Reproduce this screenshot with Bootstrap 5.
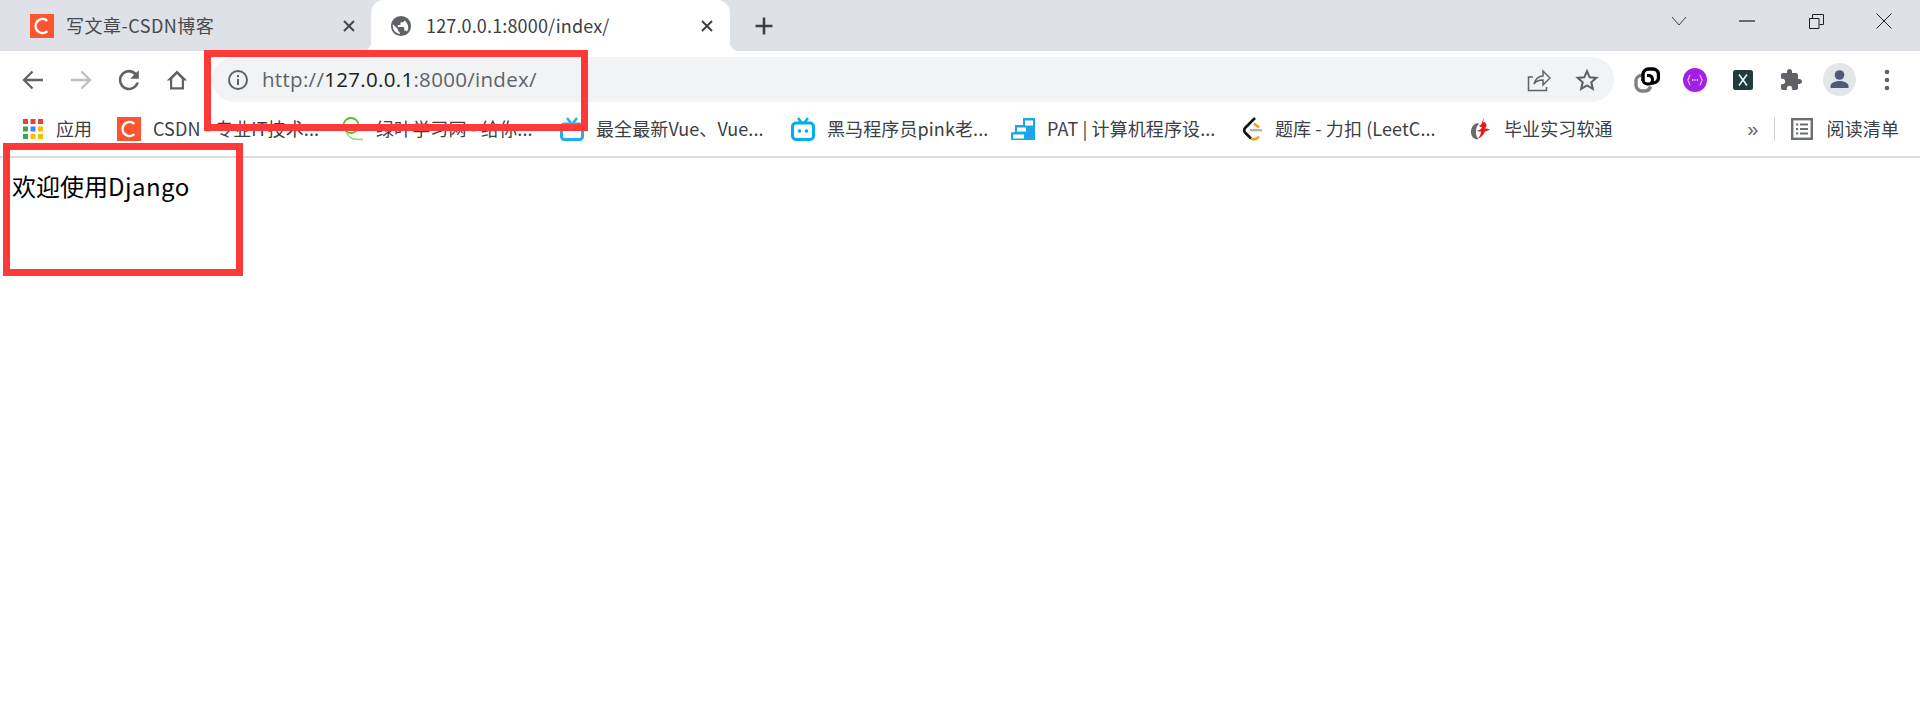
<!DOCTYPE html>
<html lang="zh-CN">
<head>
<meta charset="utf-8">
<title>127.0.0.1:8000/index/</title>
<link href="https://cdn.jsdelivr.net/npm/bootstrap@5.3.0/dist/css/bootstrap.min.css" rel="stylesheet">
<style>
html,body{height:100%;overflow:hidden}
body{background:#fff;color:#000;font-family:"Noto Sans CJK SC","Liberation Sans",sans-serif;position:relative}
.tabbar{height:51px;background:#dee1e6}
.tab-off{width:371px;padding-left:30px;padding-right:15px;font-size:18px;color:#45484d;letter-spacing:.5px}
.tab-on{width:359px;padding-left:19px;padding-right:16px;background:#fff;border-radius:13px 13px 0 0;font-size:18px;color:#3c4043;position:relative;letter-spacing:.15px}
.tab-on::before,.tab-on::after{content:"";position:absolute;bottom:0;width:9px;height:9px}
.tab-on::before{left:-9px;background:radial-gradient(circle at 0 0,#dee1e6 9px,#fff 9.5px)}
.tab-on::after{right:-9px;background:radial-gradient(circle at 100% 0,#dee1e6 9px,#fff 9.5px)}
.tab-title{flex:1;margin-left:12px;white-space:nowrap;overflow:hidden}
.tab-on .tab-title{margin-left:14px}
.newtab{margin-left:20px;width:28px}
.winctl{width:68px;height:42px}
.winctl-gap{margin-right:1px}
.winctl-end{margin-right:2px}
.toolbar{height:57px;padding:6px 9px 0}
.tbtn{width:48px;height:45px;flex:none}
.omni{height:45px;background:#f1f3f4;border-radius:23px;margin:0 9px 0 11px;padding-left:15px;padding-right:3px;font-family:"Open Sans","Liberation Sans",sans-serif;font-size:20.5px;letter-spacing:.3px;color:#5f6368}
.omni b{font-weight:400;color:#202124}
.omni-url{margin-left:13px}
.bmbar{height:48px;padding:0 0 7px 23px;font-size:18px;color:#3c4043;white-space:nowrap;letter-spacing:.1px}
.bm{flex:none;gap:12px}
.bm-w1{width:94px;gap:13px}
.bm-w2{width:225px}
.bm-w3{width:218px}
.bm-w4{width:231px}
.bm-w5{width:220px}
.bm-w6{width:232px}
.bm-w7{width:226px;gap:12px}
.bm-w8{gap:14px}
.bm-fill{flex:1}
.bm-more{font-size:20px;color:#5f6368;margin-right:15px;line-height:1;font-family:"Liberation Sans",sans-serif}
.bm-sep{width:1px;height:24px;background:#d3d5d8;margin-right:16px}
.bm-read{gap:14px;margin-right:21px}
.rule{height:2px;background:#dadce0}
.page-msg{margin:0;padding:13px 12px 0;font-size:24px;line-height:30px;color:#000}
.page-latin{letter-spacing:.45px}
.redbox{position:absolute;border:7px solid #ff3838;pointer-events:none}
.rb-a{left:204px;top:50px;width:384px;height:81px}
.rb-b{left:3px;top:143px;width:240px;height:133px}
svg{display:block;flex:none}
</style>
</head>
<body>
<div class="tabbar d-flex align-items-stretch">
  <div class="tab-off d-flex align-items-center">
    <svg width="24" height="24" viewBox="0 0 24 24"><rect width="24" height="24" fill="#fc5531"/><path d="M16.500 6.200A7 7 0 1 0 16.500 17.800" fill="none" stroke="#fff" stroke-width="2.400" stroke-linecap="round"/></svg>
    <span class="tab-title">写文章-CSDN博客</span>
    <svg width="14" height="14" viewBox="0 0 14 14"><path d="M2 2l10 10M12 2L2 12" stroke="#45484d" stroke-width="2"/></svg>
  </div>
  <div class="tab-on d-flex align-items-center">
    <svg width="22" height="22" viewBox="0 0 24 24"><path fill="#5f6368" d="M12 1a11 11 0 1 0 0 22 11 11 0 0 0 0-22zM3 12c0-.7.1-1.300.2-2l5.300 5.300v1.100c0 1.100.9 2 2 2v2.500A9 9 0 0 1 3 12zm15.400 6.400c-.3-.8-1-1.400-1.900-1.400h-1v-3c0-.6-.4-1-1-1h-6v-2h2c.6 0 1-.4 1-1V8h2c1.100 0 2-.9 2-2v-.4a9 9 0 0 1 2.900 12.800z"/></svg>
    <span class="tab-title">127.0.0.1:8000/index/</span>
    <svg width="14" height="14" viewBox="0 0 14 14"><path d="M2 2l10 10M12 2L2 12" stroke="#3c4043" stroke-width="2"/></svg>
  </div>
  <div class="newtab d-flex align-items-center justify-content-center">
    <svg width="20" height="20" viewBox="0 0 20 20"><path d="M10 1.500v17M1.500 10h17" stroke="#3c4043" stroke-width="2.600"/></svg>
  </div>
  <div class="ms-auto d-flex align-items-start">
    <div class="winctl d-flex align-items-center justify-content-center"><svg width="16" height="10" viewBox="0 0 16 10"><path d="M1 1l7 8 7-8" fill="none" stroke="#3c4043" stroke-width="1"/></svg></div>
    <div class="winctl winctl-gap d-flex align-items-center justify-content-center"><svg width="16" height="2" viewBox="0 0 16 2"><path d="M0 1h16" stroke="#1f1f1f" stroke-width="1.200"/></svg></div>
    <div class="winctl d-flex align-items-center justify-content-center"><svg width="15" height="15" viewBox="0 0 15 15"><path d="M.5 4.500h9.500v10H.5zM3.500 4V.5h11v10H10.500" fill="none" stroke="#1f1f1f" stroke-width="1"/></svg></div>
    <div class="winctl winctl-end d-flex align-items-center justify-content-center"><svg width="16" height="16" viewBox="0 0 16 16"><path d="M.5.500l15 15M15.500.500l-15 15" stroke="#1f1f1f" stroke-width="1"/></svg></div>
  </div>
</div>

<div class="toolbar d-flex align-items-start">
  <div class="tbtn d-flex align-items-center justify-content-center"><svg width="24" height="24" viewBox="0 0 24 24"><path d="M22 12H3M11.500 3.500L3 12l8.500 8.500" fill="none" stroke="#5f6368" stroke-width="2.300"/></svg></div>
  <div class="tbtn d-flex align-items-center justify-content-center"><svg width="24" height="24" viewBox="0 0 24 24"><path d="M2 12h19M12.500 3.500L21 12l-8.500 8.500" fill="none" stroke="#bdc1c6" stroke-width="2.300"/></svg></div>
  <div class="tbtn d-flex align-items-center justify-content-center"><svg width="27" height="27" viewBox="0 0 24 24"><path fill="#5f6368" d="M20.300 3.700v7.600h-7.600l3.500-3.500A6.800 6.800 0 0 0 11.500 5.700a6.800 6.800 0 1 0 6.500 9h2.400a9.100 9.100 0 1 1-8.900-11.300c2.500 0 4.800 1 6.400 2.700z"/></svg></div>
  <div class="tbtn d-flex align-items-center justify-content-center"><svg width="24" height="24" viewBox="0 0 24 24"><path d="M12 2.500L1.800 12.500h3.200v9h14v-9h3.200zM7.200 19.300v-8.400L12 6l4.800 4.900v8.400z" fill="#5f6368" fill-rule="evenodd"/></svg></div>
  <div class="omni flex-grow-1 d-flex align-items-center">
    <svg width="22" height="22" viewBox="0 0 22 22"><circle cx="11" cy="11" r="9" fill="none" stroke="#5f6368" stroke-width="2"/><path d="M11 10v6M11 6v2.200" stroke="#5f6368" stroke-width="2"/></svg>
    <span class="omni-url">http://<b>127.0.0.1</b>:8000/index/</span>
    <div class="ms-auto d-flex">
      <div class="tbtn d-flex align-items-center justify-content-center"><svg width="24" height="24" viewBox="0 0 24 24"><path d="M6 9H1.500v13.500h18V19M7 16c1-5 5-8 9-8V3l7 7-7 7v-5c-4 0-7 1-9 4z" fill="none" stroke="#5f6368" stroke-width="1.500"/></svg></div>
      <div class="tbtn d-flex align-items-center justify-content-center"><svg width="24" height="24" viewBox="0 0 24 24"><path d="M12 3.200l2.700 6.100 6.600.6-5 4.400 1.500 6.500L12 17.400l-5.800 3.400 1.500-6.500-5-4.400 6.600-.6z" fill="none" stroke="#5f6368" stroke-width="2.100"/></svg></div>
    </div>
  </div>
  <div class="tbtn d-flex align-items-center justify-content-center"><svg width="26" height="26" viewBox="0 0 26 26"><path d="M8 8.500H7a5.500 5.500 0 0 0-5 5.500v4a6 6 0 0 0 6 6h3a6 6 0 0 0 5.500-4.500" fill="none" stroke="#808080" stroke-width="3.400"/><path d="M9 14V7.500A5.500 5.500 0 0 1 14.500 2H19a5.500 5.500 0 0 1 5.500 5.500v3A5.500 5.500 0 0 1 19 16h-1" fill="none" stroke="#000" stroke-width="3.400"/><path d="M9 12.500a4.500 4.500 0 0 0 4.500 4.500H15a4 4 0 0 0 3.500-4v-1A4 4 0 0 0 14.500 8.500H13" fill="none" stroke="#000" stroke-width="3"/></svg></div>
  <div class="tbtn d-flex align-items-center justify-content-center"><svg width="24" height="24" viewBox="0 0 24 24"><circle cx="12" cy="12" r="12" fill="#a21fe8"/><path d="M7.500 7C5.500 7 6.500 11.500 4.500 12c2 .5 1 5 3 5M16.500 7c2 0 1 4.500 3 5-2 .5-1 5-3 5" fill="none" stroke="#f0d8ff" stroke-width="1.100"/><path d="M9 12h1.200M11.400 12h1.200M13.800 12H15" stroke="#fff" stroke-width="1.600"/></svg></div>
  <div class="tbtn d-flex align-items-center justify-content-center"><svg width="20" height="20" viewBox="0 0 20 20"><rect width="20" height="20" rx="2.500" fill="#25393f"/><path d="M6 4.500l8 11M14 4.500l-8 11" stroke="#eef4f5" stroke-width="1.600"/></svg></div>
  <div class="tbtn d-flex align-items-center justify-content-center"><svg width="24" height="24" viewBox="0 0 24 24"><path fill="#5f6368" d="M20.500 11H19V7c0-1.100-.9-2-2-2h-4V3.500C13 2.120 11.880 1 10.500 1S8 2.120 8 3.500V5H4c-1.100 0-1.990.9-1.990 2v3.800H3.500c1.490 0 2.700 1.210 2.700 2.700s-1.210 2.700-2.700 2.700H2V20c0 1.100.9 2 2 2h3.800v-1.500c0-1.490 1.210-2.700 2.700-2.700 1.490 0 2.700 1.210 2.700 2.700V22H17c1.100 0 2-.9 2-2v-4h1.500c1.380 0 2.500-1.120 2.500-2.500S21.880 11 20.500 11z"/></svg></div>
  <div class="tbtn d-flex align-items-center justify-content-center"><svg width="33" height="33" viewBox="0 0 33 33"><circle cx="16.500" cy="16.500" r="16.500" fill="#e3e5e9"/><circle cx="16.500" cy="12" r="4.800" fill="#4f5b73"/><path d="M7.500 25v-2c0-3.500 5.500-5 9-5s9 1.500 9 5v2z" fill="#4f5b73"/></svg></div>
  <div class="tbtn d-flex align-items-center justify-content-center"><svg width="6" height="22" viewBox="0 0 6 22"><circle cx="3" cy="3" r="2.300" fill="#5f6368"/><circle cx="3" cy="11" r="2.300" fill="#5f6368"/><circle cx="3" cy="19" r="2.300" fill="#5f6368"/></svg></div>
</div>

<div class="bmbar d-flex align-items-center">
  <div class="bm bm-w1 d-flex align-items-center">
    <svg width="20" height="20" viewBox="0 0 20 20"><rect width="5" height="5" fill="#ea4335"/><rect x="7.500" width="5" height="5" fill="#ea4335"/><rect x="15" width="5" height="5" fill="#ea4335"/><rect y="7.500" width="5" height="5" fill="#34a853"/><rect x="7.500" y="7.500" width="5" height="5" fill="#4285f4"/><rect x="15" y="7.500" width="5" height="5" fill="#fbbc05"/><rect y="15" width="5" height="5" fill="#34a853"/><rect x="7.500" y="15" width="5" height="5" fill="#fbbc05"/><rect x="15" y="15" width="5" height="5" fill="#fbbc05"/></svg>
    <span>应用</span>
  </div>
  <div class="bm bm-w2 d-flex align-items-center">
    <svg width="24" height="24" viewBox="0 0 24 24"><rect width="24" height="24" fill="#fc5531"/><path d="M16.500 6.200A7 7 0 1 0 16.500 17.800" fill="none" stroke="#fff" stroke-width="2.400" stroke-linecap="round"/></svg>
    <span>CSDN - 专业IT技术...</span>
  </div>
  <div class="bm bm-w3 d-flex align-items-center">
    <svg width="22" height="24" viewBox="0 0 22 24"><circle cx="9" cy="8.500" r="7.500" fill="none" stroke="#4cc522" stroke-width="1.800"/><path d="M4 15c1 2 3 5 6 6.500 3 1 7 1 11 1" fill="none" stroke="#8fd67a" stroke-width="1.600"/><path d="M5 13c3-1 6-3 8-6" fill="none" stroke="#4cc522" stroke-width="1.500"/></svg>
    <span>绿叶学习网 - 给你...</span>
  </div>
  <div class="bm bm-w4 d-flex align-items-center">
    <svg width="24" height="24" viewBox="0 0 24 24"><rect x="1.500" y="7" width="21" height="15.500" rx="3" fill="none" stroke="#1fb0e8" stroke-width="3"/><path d="M7 1l4 5M17 1l-4 5" stroke="#1fb0e8" stroke-width="2.500"/></svg>
    <span>最全最新Vue、Vue...</span>
  </div>
  <div class="bm bm-w5 d-flex align-items-center">
    <svg width="24" height="24" viewBox="0 0 24 24"><rect x="1.500" y="6" width="21" height="16.500" rx="3.500" fill="none" stroke="#00aeec" stroke-width="3"/><path d="M7 1l3.500 4.500M17 1l-3.500 4.500" stroke="#00aeec" stroke-width="2.500"/><circle cx="8.500" cy="14" r="1.800" fill="#00aeec"/><circle cx="15.500" cy="14" r="1.800" fill="#00aeec"/></svg>
    <span>黑马程序员pink老...</span>
  </div>
  <div class="bm bm-w6 d-flex align-items-center">
    <svg width="24" height="24" viewBox="0 0 24 24"><path fill="#1ba7e7" d="M12 1h12v22H0v-7.500l4-.5V8h8z"/><path fill="#fff" d="M14 3.500h8v5h-8zM6 10.500h9v4H6zM2 17.500h11v4H2z"/></svg>
    <span>PAT | 计算机程序设...</span>
  </div>
  <div class="bm bm-w7 d-flex align-items-center">
    <svg width="20" height="24" viewBox="0 0 20 24"><path d="M12 1L2.500 10.500c-1.800 1.800-1.800 3.700 0 5.500L8 21.500" fill="none" stroke="#111" stroke-width="2.600"/><path d="M8 21.500c2.500 1.500 5.500 1 8-2M11 6.500l5 4" fill="none" stroke="#f0a020" stroke-width="2.600"/><path d="M7 13.200h12" stroke="#b3b3b3" stroke-width="2.400"/></svg>
    <span>题库 - 力扣 (LeetC...</span>
  </div>
  <div class="bm bm-w8 d-flex align-items-center">
    <svg width="21" height="24" viewBox="0 0 21 24"><path d="M9 6C3 7 1 13 2.500 18c1 3 4 5 7 4-2-2-3-5-2.500-9 .3-2.500 1.500-5 3-6z" fill="#6a6a6a"/><path d="M14 1c1 1 .5 3 0 4 2 0 4 2 3.500 4-.2 1-1 2-2 2.500 2 0 4 .5 5.500 1-2 1-3.500 1.500-5 2-1 3-4 6-7 7 1.500-2 3-4 3-7-1.500 0-3 0-4-1 2 0 4-1 5-3-1.500-.5-2.500-1-3-2 1.500 0 2.500-1 3-2.500.3-1.500 1-3 1.500-5z" fill="#e21b1b"/></svg>
    <span>毕业实习软通</span>
  </div>
  <div class="bm-fill"></div>
  <span class="bm-more">»</span>
  <div class="bm-sep"></div>
  <div class="bm-read d-flex align-items-center">
    <svg width="22" height="24" viewBox="0 0 22 24"><rect x="1.200" y="2.200" width="19.600" height="19.600" fill="none" stroke="#6b6e72" stroke-width="2.400"/><path d="M5 7.500h2.200M9 7.500h8M5 12h2.200M9 12h8M5 16.500h2.200M9 16.500h8" stroke="#6b6e72" stroke-width="1.800"/></svg>
    <span>阅读清单</span>
  </div>
</div>
<div class="rule"></div>

<p class="page-msg">欢迎使用<span class="page-latin">Django</span></p>

<div class="redbox rb-a"></div>
<div class="redbox rb-b"></div>
<script src="https://cdn.jsdelivr.net/npm/bootstrap@5.3.0/dist/js/bootstrap.bundle.min.js"></script>
</body>
</html>
